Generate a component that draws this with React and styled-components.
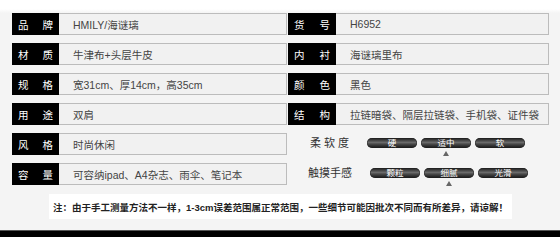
import React from "react";
import styled, { createGlobalStyle } from "styled-components";

const Global = createGlobalStyle`
  html, body { margin: 0; padding: 0; background: #f4f4f4; }
  body { font-family: "Liberation Sans", "Noto Sans CJK SC", sans-serif; }
`;

const Page = styled.div`
  width: 560px;
  height: 249px;
  box-sizing: border-box;
  padding-top: 13px;
  background: linear-gradient(#ffffff 0, #ffffff 9px, #f4f4f4 13px);
  display: flex;
  flex-direction: column;
  overflow: hidden;
`;

const SpecGrid = styled.div`
  display: grid;
  grid-template-columns: 276px 261px;
  grid-auto-rows: 22px;
  row-gap: 8px;
  margin-left: 12px;
`;

const Field = styled.div`
  display: flex;
  height: 22px;
`;

const Label = styled.div`
  width: ${(p) => p.$w}px;
  flex: none;
  background: #000;
  color: #fff;
  font-size: 10.5px;
  display: flex;
  align-items: center;
  justify-content: space-between;
  padding: 0 6px;
  box-sizing: border-box;
`;

const Value = styled.div`
  flex: 1;
  display: flex;
  align-items: center;
  box-sizing: border-box;
  border: 1px solid #bcbcbc;
  border-left: none;
  margin-right: ${(p) => (p.$gap ? 1 : 0)}px;
  background: #f1f1f1;
  color: #444;
  font-size: 10.5px;
  padding-left: 14px;
  white-space: nowrap;
`;

const FeatureRow = styled.div`
  display: flex;
  align-items: flex-start;
  padding-top: 5px;
  box-sizing: border-box;
  height: 22px;
`;

const FeatureLabel = styled.div`
  width: 64px;
  text-align: right;
  font-size: 11px;
  line-height: 10px;
  color: #333;
  letter-spacing: ${(p) => p.$ls || 0}px;
  margin-right: ${(p) => 18 - (p.$ls || 0)}px;
  white-space: nowrap;
`;

const Pills = styled.div`
  display: flex;
  gap: 4px;
`;

const PillWrap = styled.div`
  position: relative;
  width: 50px;
  height: 10px;
`;

const Pill = styled.div`
  width: 50px;
  height: 10px;
  border-radius: 5px;
  background: linear-gradient(#1a1a1a 0%, #6a6a6a 45%, #4a4a4a 60%, #151515 100%);
  box-shadow: inset 0 0 0 0.5px #222;
  color: #fff;
  font-size: 8.5px;
  line-height: 10px;
  text-align: center;
`;

const Marker = styled.div`
  position: absolute;
  left: 50%;
  top: 13px;
  margin-left: -3px;
  width: 0;
  height: 0;
  border-left: 3px solid transparent;
  border-right: 3px solid transparent;
  border-bottom: 5px solid #666;
`;

const Note = styled.div`
  margin: 9px 0 0 49px;
  width: 463px;
  height: 25px;
  background: #fff;
  display: flex;
  align-items: center;
  padding-left: 4px;
  box-sizing: border-box;
  font-size: 9.5px;
  font-weight: 700;
  color: #222;
  white-space: nowrap;
`;

const BlackBar = styled.div`
  margin-top: 11px;
  height: 7px;
  background: #000;
  border-top: 1px solid #555;
  box-sizing: border-box;
`;

const Footer = styled.div`
  flex: 1;
  background: #fff;
`;

const SpecField = ({ a, b, value, w, gap }) => (
  <Field>
    <Label $w={w}>
      <span>{a}</span>
      <span>{b}</span>
    </Label>
    <Value $gap={gap}>{value}</Value>
  </Field>
);

const Feature = ({ label, ls, options, selected }) => (
  <FeatureRow>
    <FeatureLabel $ls={ls}>{label}</FeatureLabel>
    <Pills>
      {options.map((o, i) => (
        <PillWrap key={o}>
          <Pill>{o}</Pill>
          {i === selected && <Marker />}
        </PillWrap>
      ))}
    </Pills>
  </FeatureRow>
);

export default function App() {
  return (
    <>
      <Global />
      <Page>
        <SpecGrid>
          <SpecField w={47} gap a="品" b="牌" value="HMILY/海谜璃" />
          <SpecField w={48} a="货" b="号" value="H6952" />
          <SpecField w={47} gap a="材" b="质" value="牛津布+头层牛皮" />
          <SpecField w={48} a="内" b="衬" value="海谜璃里布" />
          <SpecField w={47} gap a="规" b="格" value="宽31cm、厚14cm，高35cm" />
          <SpecField w={48} a="颜" b="色" value="黑色" />
          <SpecField w={47} gap a="用" b="途" value="双肩" />
          <SpecField w={48} a="结" b="构" value="拉链暗袋、隔层拉链袋、手机袋、证件袋" />
          <SpecField w={47} gap a="风" b="格" value="时尚休闲" />
          <Feature label="柔软度" ls={3} options={["硬", "适中", "软"]} selected={1} />
          <SpecField w={47} gap a="容" b="量" value="可容纳ipad、A4杂志、雨伞、笔记本" />
          <Feature label="触摸手感" options={["颗粒", "细腻", "光滑"]} selected={1} />
        </SpecGrid>
        <Note>注：由于手工测量方法不一样，1-3cm误差范围属正常范围，一些细节可能因批次不同而有所差异，请谅解！</Note>
        <BlackBar />
        <Footer />
      </Page>
    </>
  );
}
